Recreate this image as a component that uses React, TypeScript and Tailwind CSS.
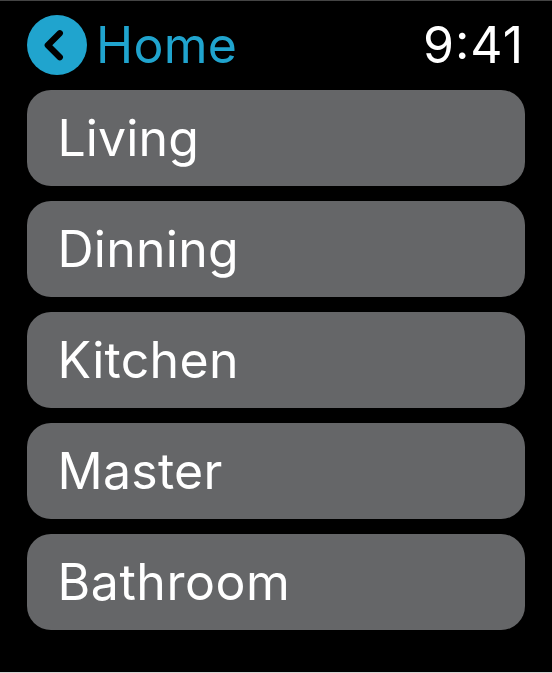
const rooms = [
  { name: "Living", spacing: "tracking-[0.1px]" },
  { name: "Dinning", spacing: "tracking-[0.25px]" },
  { name: "Kitchen", spacing: "tracking-[0.3px]" },
  { name: "Master", spacing: "tracking-[0.25px]" },
  { name: "Bathroom", spacing: "tracking-[0.55px]" },
];

export default function App() {
  return (
    <div className="flex h-[673px] w-[552px] flex-col border-y border-t-[#444444] border-b-[#d4d4d4] bg-black font-['Inter',sans-serif] text-white">
      <header className="flex h-[89px] shrink-0 items-start justify-between pl-[27px] pr-[28px] pt-[14px]">
        <button className="flex h-[60px] items-center gap-[9px] text-[#20a4ce]">
          <svg width="60" height="60" viewBox="0 0 60 60">
            <circle cx="30" cy="30" r="30" fill="#20a4ce" />
            <path d="M32.8 18.3 20.8 30.2 32.8 42.2" fill="none" stroke="#000" strokeWidth="6.3" strokeLinecap="round" strokeLinejoin="round" />
          </svg>
          <span className="text-[50px] leading-[60px] tracking-[0.3px]">Home</span>
        </button>
        <span className="flex text-[50px] leading-[60px] tracking-[1px]">
          <span>9</span>
          <span className="-mt-[4px]">:</span>
          <span>41</span>
        </span>
      </header>
      <main className="flex flex-col gap-[15px] px-[27px]">
        {rooms.map((room) => (
          <button key={room.name} className={`flex h-24 items-center rounded-[24px] bg-[#656668] pl-[30.5px] text-left text-[50px] leading-[60px] ${room.spacing}`}>
            {room.name}
          </button>
        ))}
      </main>
    </div>
  );
}
